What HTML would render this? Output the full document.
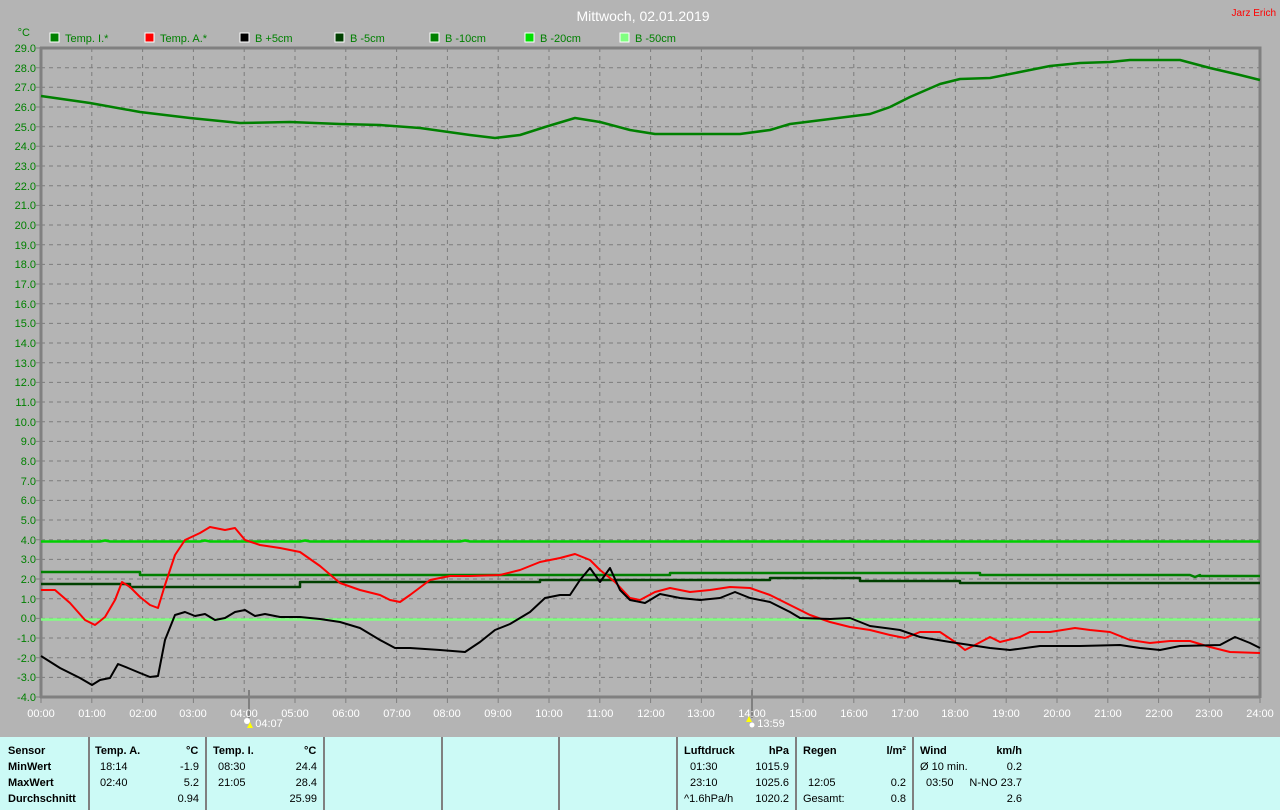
<!DOCTYPE html>
<html><head><meta charset="utf-8"><style>
body{margin:0;width:1280px;height:810px;background:#b4b4b4;overflow:hidden;font-family:"Liberation Sans",Arial,sans-serif;}
svg{position:absolute;left:0;top:0}
.p{position:absolute;left:0;top:737px;width:1280px;height:73px;background:#ccfaf6;font-size:11px;color:#000}
.c{position:absolute;top:0;height:73px;border-left:2px solid #808080}
.t{position:absolute;white-space:pre}
.b{font-weight:bold}
</style></head><body>
<svg width="1280" height="737" viewBox="0 0 1280 737" font-family="Liberation Sans, Arial, sans-serif">
<g stroke="#7c7c7c" stroke-width="1" stroke-dasharray="4,4">
<path id="h" d="M41 67.7H1260M41 87.3H1260M41 107H1260M41 126.7H1260M41 146.3H1260M41 166H1260M41 185.7H1260M41 205.4H1260M41 225H1260M41 244.7H1260M41 264.4H1260M41 284H1260M41 303.7H1260M41 323.4H1260M41 343H1260M41 362.7H1260M41 382.4H1260M41 402H1260M41 421.7H1260M41 441.4H1260M41 461H1260M41 480.7H1260M41 500.4H1260M41 520H1260M41 539.7H1260M41 559.4H1260M41 579H1260M41 598.7H1260M41 618.4H1260M41 638H1260M41 657.7H1260M41 677.4H1260"/>
<path d="M91.8 48V697M142.6 48V697M193.4 48V697M244.2 48V697M295 48V697M345.8 48V697M396.6 48V697M447.4 48V697M498.2 48V697M549 48V697M599.8 48V697M650.6 48V697M701.4 48V697M752.2 48V697M803 48V697M853.8 48V697M904.6 48V697M955.4 48V697M1006.2 48V697M1057 48V697M1107.8 48V697M1158.6 48V697M1209.4 48V697"/>
</g>
<path d="M41 47V698M40 48H1260V698M40 697H1260" stroke="#808080" stroke-width="3" fill="none"/>
<g stroke="#808080" stroke-width="1"><path d="M36 48H41M36 67.7H41M36 87.3H41M36 107H41M36 126.7H41M36 146.3H41M36 166H41M36 185.7H41M36 205.4H41M36 225H41M36 244.7H41M36 264.4H41M36 284H41M36 303.7H41M36 323.4H41M36 343H41M36 362.7H41M36 382.4H41M36 402H41M36 421.7H41M36 441.4H41M36 461H41M36 480.7H41M36 500.4H41M36 520H41M36 539.7H41M36 559.4H41M36 579H41M36 598.7H41M36 618.4H41M36 638H41M36 657.7H41M36 677.4H41M36 697H41"/>
<path d="M41 697V703M91.8 697V703M142.6 697V703M193.4 697V703M295 697V703M345.8 697V703M396.6 697V703M447.4 697V703M498.2 697V703M549 697V703M599.8 697V703M650.6 697V703M701.4 697V703M803 697V703M853.8 697V703M904.6 697V703M955.4 697V703M1006.2 697V703M1057 697V703M1107.8 697V703M1158.6 697V703M1209.4 697V703M1260 697V703"/>
<path d="M249 690V718M752 690V718" stroke-width="2"/></g>
<g fill="#008000" font-size="11" text-anchor="end">
<text x="36" y="52">29.0</text><text x="36" y="72">28.0</text><text x="36" y="91">27.0</text><text x="36" y="111">26.0</text><text x="36" y="131">25.0</text><text x="36" y="150">24.0</text><text x="36" y="170">23.0</text><text x="36" y="190">22.0</text><text x="36" y="209">21.0</text><text x="36" y="229">20.0</text><text x="36" y="249">19.0</text><text x="36" y="268">18.0</text><text x="36" y="288">17.0</text><text x="36" y="308">16.0</text><text x="36" y="327">15.0</text><text x="36" y="347">14.0</text><text x="36" y="367">13.0</text><text x="36" y="386">12.0</text><text x="36" y="406">11.0</text><text x="36" y="426">10.0</text><text x="36" y="445">9.0</text><text x="36" y="465">8.0</text><text x="36" y="485">7.0</text><text x="36" y="504">6.0</text><text x="36" y="524">5.0</text><text x="36" y="544">4.0</text><text x="36" y="563">3.0</text><text x="36" y="583">2.0</text><text x="36" y="603">1.0</text><text x="36" y="622">0.0</text><text x="36" y="642">-1.0</text><text x="36" y="662">-2.0</text><text x="36" y="681">-3.0</text><text x="36" y="701">-4.0</text>
<text x="30" y="36">°C</text></g>
<g fill="#fff" font-size="11" text-anchor="middle">
<text x="41" y="717">00:00</text><text x="92" y="717">01:00</text><text x="143" y="717">02:00</text><text x="193" y="717">03:00</text><text x="244" y="717">04:00</text><text x="295" y="717">05:00</text><text x="346" y="717">06:00</text><text x="397" y="717">07:00</text><text x="447" y="717">08:00</text><text x="498" y="717">09:00</text><text x="549" y="717">10:00</text><text x="600" y="717">11:00</text><text x="651" y="717">12:00</text><text x="701" y="717">13:00</text><text x="752" y="717">14:00</text><text x="803" y="717">15:00</text><text x="854" y="717">16:00</text><text x="905" y="717">17:00</text><text x="955" y="717">18:00</text><text x="1006" y="717">19:00</text><text x="1057" y="717">20:00</text><text x="1108" y="717">21:00</text><text x="1159" y="717">22:00</text><text x="1209" y="717">23:00</text><text x="1260" y="717">24:00</text>
<text x="269" y="727">04:07</text><text x="771" y="727">13:59</text>
<text x="643" y="21" font-size="14">Mittwoch, 02.01.2019</text></g>
<circle cx="247" cy="721" r="3" fill="#fff"/><path d="M250 722l3 6h-6z" fill="#ff0"/>
<path d="M749 716l3 6h-6z" fill="#ff0"/><circle cx="752" cy="725" r="2.5" fill="#fff"/>
<text x="1276" y="16" fill="#f00" font-size="10" text-anchor="end">Jarz Erich</text>
<g font-size="11" fill="#008000">
<rect x="50" y="33" width="9" height="9" fill="#008000" stroke="#fff"/><text x="65" y="42">Temp. I.*</text>
<rect x="145" y="33" width="9" height="9" fill="#f00" stroke="#fff"/><text x="160" y="42">Temp. A.*</text>
<rect x="240" y="33" width="9" height="9" fill="#000" stroke="#fff"/><text x="255" y="42">B +5cm</text>
<rect x="335" y="33" width="9" height="9" fill="#004000" stroke="#fff"/><text x="350" y="42">B -5cm</text>
<rect x="430" y="33" width="9" height="9" fill="#008000" stroke="#fff"/><text x="445" y="42">B -10cm</text>
<rect x="525" y="33" width="9" height="9" fill="#00e000" stroke="#fff"/><text x="540" y="42">B -20cm</text>
<rect x="620" y="33" width="9" height="9" fill="#80ff80" stroke="#fff"/><text x="635" y="42">B -50cm</text></g>
<g fill="none" stroke-width="2.5" stroke-linejoin="round">
<path stroke="#80ff80" d="M41 619.5H1260"/>
<path stroke="#00d000" d="M41 541.5H100l5-1 5 1H200l5-1 5 1H300l5-1 5 1H460l5-1 5 1H1260"/>
<path stroke="#008000" d="M41 572H140V575H670V573H980V575H1190l5 2 5-2V576H1260"/>
<path stroke="#004000" d="M41 584H130V587H300V582H540V580H770V578H860V581H960V583H1260"/>
<path stroke="#008000" d="M41 96L90 103L140 112L190 118L240 123L290 122L340 124L380 125L420 128L470 135L495 138L520 135L545 127L575 118L600 122L630 130L655 134L700 134L740 134L770 130L790 124L830 119L870 114L890 107L910 97L940 84L960 79L990 78L1020 72L1050 66L1080 63L1110 62L1130 60L1180 60L1210 68L1240 75L1260 80"/>
<path stroke="#f00" stroke-width="2" d="M41 590L55 590L70 603L85 620L95 625L105 617L115 600L122 582L130 587L140 597L150 605L158 608L165 585L175 555L185 540L200 533L210 527L225 530L235 528L245 540L260 545L280 548L300 552L320 566L340 583L360 590L380 595L390 600L400 602L410 595L430 580L450 576L470 576L500 575L520 570L540 562L560 558L575 554L590 560L600 570L615 582L630 598L640 600L655 592L670 588L690 592L710 590L730 587L750 588L770 595L790 605L810 615L830 622L850 627L870 630L890 635L905 638L920 632L940 632L955 642L965 650L975 645L990 637L1000 642L1020 637L1030 632L1050 632L1075 628L1090 630L1110 632L1130 640L1150 643L1170 641L1190 641L1210 647L1230 652L1260 653"/>
<path stroke="#000" stroke-width="2" d="M41 656L60 668L80 678L92 685L100 680L110 678L118 664L128 668L140 673L150 677L158 676L165 640L175 615L185 612L195 616L205 614L215 620L225 618L235 612L245 610L255 616L265 614L280 617L300 617L320 619L340 622L360 628L380 640L395 648L410 648L440 650L465 652L480 642L495 630L510 624L530 612L545 598L560 595L570 595L580 580L590 568L600 582L610 568L620 590L630 600L645 603L660 594L680 598L700 600L720 598L735 592L750 598L770 602L790 612L800 618L830 619L850 618L870 626L900 630L920 637L950 642L970 645L990 648L1010 650L1040 646L1080 646L1120 645L1140 648L1160 650L1180 646L1220 645L1235 637L1250 643L1260 648"/>
</g>
</svg>
<div class="p">
<div class="c" style="left:88px"></div><div class="c" style="left:205px"></div><div class="c" style="left:323px"></div><div class="c" style="left:441px"></div><div class="c" style="left:558px"></div><div class="c" style="left:676px"></div><div class="c" style="left:795px"></div><div class="c" style="left:912px"></div>
<div class="t b" style="left:8px;top:8px">Sensor</div><div class="t b" style="left:8px;top:24px">MinWert</div><div class="t b" style="left:8px;top:40px">MaxWert</div><div class="t b" style="left:8px;top:56px">Durchschnitt</div>
<div class="t b" style="left:95px;top:8px">Temp. A.</div><div class="t b" style="left:186px;top:8px">°C</div>
<div class="t" style="left:100px;top:24px">18:14</div><div class="t" style="left:100px;top:40px">02:40</div>
<div class="t" style="right:1081px;top:24px">-1.9</div><div class="t" style="right:1081px;top:40px">5.2</div><div class="t" style="right:1081px;top:56px">0.94</div>
<div class="t b" style="left:213px;top:8px">Temp. I.</div><div class="t b" style="left:304px;top:8px">°C</div>
<div class="t" style="left:218px;top:24px">08:30</div><div class="t" style="left:218px;top:40px">21:05</div>
<div class="t" style="right:963px;top:24px">24.4</div><div class="t" style="right:963px;top:40px">28.4</div><div class="t" style="right:963px;top:56px">25.99</div>
<div class="t b" style="left:684px;top:8px">Luftdruck</div><div class="t b" style="right:491px;top:8px">hPa</div>
<div class="t" style="left:690px;top:24px">01:30</div><div class="t" style="left:690px;top:40px">23:10</div><div class="t" style="left:684px;top:56px">^1.6hPa/h</div>
<div class="t" style="right:491px;top:24px">1015.9</div><div class="t" style="right:491px;top:40px">1025.6</div><div class="t" style="right:491px;top:56px">1020.2</div>
<div class="t b" style="left:803px;top:8px">Regen</div><div class="t b" style="right:374px;top:8px">l/m²</div>
<div class="t" style="left:808px;top:40px">12:05</div><div class="t" style="left:803px;top:56px">Gesamt:</div>
<div class="t" style="right:374px;top:40px">0.2</div><div class="t" style="right:374px;top:56px">0.8</div>
<div class="t b" style="left:920px;top:8px">Wind</div><div class="t b" style="right:258px;top:8px">km/h</div>
<div class="t" style="left:920px;top:24px">Ø 10 min.</div><div class="t" style="left:926px;top:40px">03:50</div>
<div class="t" style="right:258px;top:24px">0.2</div><div class="t" style="right:258px;top:40px">N-NO 23.7</div><div class="t" style="right:258px;top:56px">2.6</div>
</div>
</body></html>
